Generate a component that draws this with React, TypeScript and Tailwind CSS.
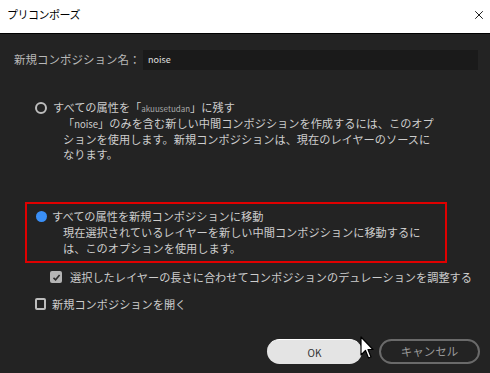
import { X } from 'lucide-react'

const jp = { fontFamily: '"Noto Sans CJK JP", "Noto Sans", sans-serif' }

function Cursor() {
  return (
    <svg className="absolute left-[360px] top-[336px]" width="14" height="24" viewBox="0 0 14 24">
      <path d="M1 1 L1 19 L5.5 14.5 L8.5 22 L11 21 L8 13.5 L13 13.5 Z" fill="#fff" stroke="#000" strokeWidth="1.2" strokeLinejoin="round" />
    </svg>
  )
}

export default function App() {
  return (
    <div className="relative w-[490px] h-[373px] overflow-hidden bg-[#232323] text-[11.2px] text-[#cdcdcd]" style={jp}>
      {/* title bar */}
      <div className="h-[34px] flex items-center justify-between pl-[7px] pr-[4px] bg-white border-b border-black">
        <span className="text-[11px] text-black tracking-[-0.5px] -mt-[4px]">プリコンポーズ</span>
        <X className="w-[14px] h-[14px] text-black -mt-[4px]" strokeWidth={1.5} />
      </div>

      <div className="flex flex-col">
        {/* name row */}
        <div className="mt-[16px] flex items-center h-[20px]">
          <span className="w-[143px] pl-[14px] text-[#b8b8b8] text-[11.5px] whitespace-nowrap">新規コンポジション名：</span>
          <div className="flex-1 mr-[12px] h-[20px] bg-[#1a1a1a] flex items-center pl-[5px] text-[9px] text-[#e0e0e0]">noise</div>
        </div>

        {/* option 1 */}
        <div className="mt-[30px] pl-[35px] leading-[15px] whitespace-nowrap">
          <div className="flex items-center gap-[6px]">
            <span className="w-[12px] h-[12px] rounded-full border-2 border-[#bdbdbd]" />
            <span>
              すべての属性を「<span className="text-[8px] text-[#a8a8a8]">akuusetudan</span>」に残す
            </span>
          </div>
          <div className="pl-[28px]">
            <div>「<span className="text-[9.5px]">noise</span>」のみを含む新しい中間コンポジションを作成するには、このオプ</div>
            <div>ションを使用します。新規コンポジションは、現在のレイヤーのソースに</div>
            <div>なります。</div>
          </div>
        </div>

        {/* option 2 (highlighted) */}
        <div className="mt-[40px] ml-[25px] w-[422px] h-[61px] border-2 border-[#e00000] pl-[9px] pt-[4px] leading-[16px] whitespace-nowrap">
          <div className="flex items-center gap-[5px]">
            <span className="w-[11px] h-[11px] rounded-full bg-[#3a8ff6]" />
            <span>すべての属性を新規コンポジションに移動</span>
          </div>
          <div className="pl-[27px]">
            <div>現在選択されているレイヤーを新しい中間コンポジションに移動するに</div>
            <div>は、このオプションを使用します。</div>
          </div>
        </div>

        {/* checkbox checked */}
        <div className="mt-[7px] pl-[50px] flex items-center gap-[8px] h-[14px] whitespace-nowrap">
          <span className="w-[12px] h-[12px] rounded-[2px] bg-[#b4b4b4] flex items-center justify-center">
            <svg width="9" height="9" viewBox="0 0 9 9">
              <path d="M1.5 4.8 L3.6 6.8 L7.6 2" fill="none" stroke="#2a2a2a" strokeWidth="1.6" />
            </svg>
          </span>
          <span>選択したレイヤーの長さに合わせてコンポジションのデュレーションを調整する</span>
        </div>

        {/* checkbox unchecked */}
        <div className="mt-[13px] pl-[35px] flex items-center gap-[6px] h-[14px] whitespace-nowrap">
          <span className="w-[11px] h-[12px] rounded-[2px] border-2 border-[#bdbdbd]" />
          <span>新規コンポジションを開く</span>
        </div>

        {/* buttons */}
        <div className="mt-[28px] flex justify-end gap-[17px] pr-[10px]">
          <button className="w-[95px] h-[25px] rounded-full bg-[#e4e4e4] border-t border-white text-[#333] text-[10px]">OK</button>
          <button className="w-[101px] h-[25px] rounded-full border-2 border-[#6a6a6a] text-[#9a9a9a] text-[11.5px]">キャンセル</button>
        </div>
      </div>

      <Cursor />
    </div>
  )
}
